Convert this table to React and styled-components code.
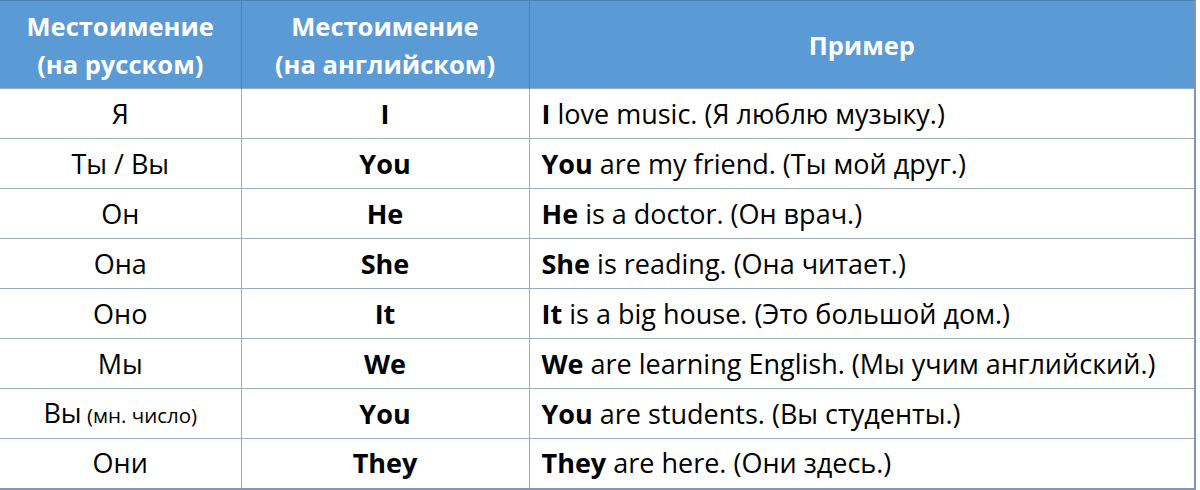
import styled, { createGlobalStyle } from "styled-components"

const Global = createGlobalStyle`
  body {
    margin: 0;
    background: white;
    font-family: "Open Sans", "Noto Sans", sans-serif;
  }
`

const Table = styled.table`
  width: 1196px;
  border-collapse: collapse;
  table-layout: fixed;
  color: black;
  font-size: 27px;
  border-right: 2px solid #8196b6;
  border-bottom: 2px solid #8196b6;
`

const Head = styled.th`
  height: 87px;
  padding: 0;
  background: #5b9bd5;
  color: white;
  font-weight: 700;
  font-size: 25.5px;
  line-height: 38px;
  text-align: center;
  border-left: 1px solid #4a7fb4;
  border-top: 1px solid #4a7fb4;
  &:first-child {
    border-left: none;
  }
`

const Row = styled.tr`
  height: 50px;
`

const Cell = styled.td`
  padding: 0 0 0 ${(p) => (p.left ? "12px" : "0")};
  line-height: 30px;
  text-align: ${(p) => (p.left ? "left" : "center")};
  font-weight: ${(p) => (p.bold ? 700 : 400)};
  border-top: 1px solid #9aabc4;
  border-left: 1px solid #9aabc4;
  white-space: nowrap;
  &:first-child {
    border-left: none;
  }
`

const Note = styled.span`
  font-size: 20.5px;
`

const rows = [
  ["Я", null, "I", "love music. (Я люблю музыку.)"],
  ["Ты / Вы", null, "You", "are my friend. (Ты мой друг.)"],
  ["Он", null, "He", "is a doctor. (Он врач.)"],
  ["Она", null, "She", "is reading. (Она читает.)"],
  ["Оно", null, "It", "is a big house. (Это большой дом.)"],
  ["Мы", null, "We", "are learning English. (Мы учим английский.)"],
  ["Вы", "(мн. число)", "You", "are students. (Вы студенты.)"],
  ["Они", null, "They", "are here. (Они здесь.)"],
]

export default function App() {
  return (
    <>
      <Global />
      <Table>
        <colgroup>
          <col style={{ width: 241 }} />
          <col style={{ width: 288 }} />
          <col />
        </colgroup>
        <thead>
          <tr>
            <Head>
              Местоимение
              <br />
              (на русском)
            </Head>
            <Head>
              Местоимение
              <br />
              (на английском)
            </Head>
            <Head>Пример</Head>
          </tr>
        </thead>
        <tbody>
          {rows.map(([ru, note, en, rest], i) => (
            <Row key={i}>
              <Cell>
                {ru}
                {note && <Note> {note}</Note>}
              </Cell>
              <Cell bold>{en}</Cell>
              <Cell left>
                <b>{en}</b> {rest}
              </Cell>
            </Row>
          ))}
        </tbody>
      </Table>
    </>
  )
}
